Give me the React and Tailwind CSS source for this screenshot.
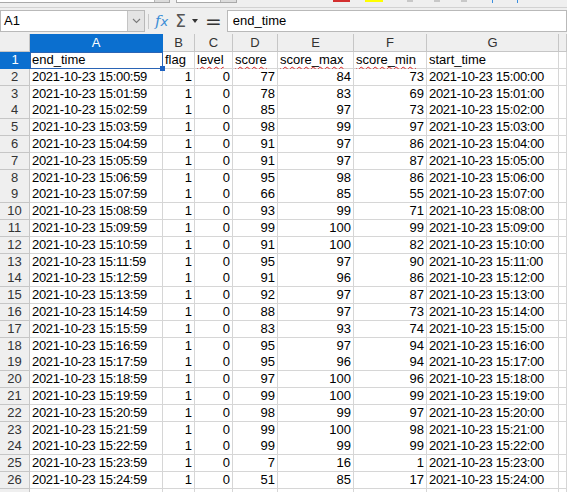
import React from 'react';

const DATA = [
	[77, 84, 73],
	[78, 83, 69],
	[85, 97, 73],
	[98, 99, 97],
	[91, 97, 86],
	[91, 97, 87],
	[95, 98, 86],
	[66, 85, 55],
	[93, 99, 71],
	[99, 100, 99],
	[91, 100, 82],
	[95, 97, 90],
	[91, 96, 86],
	[92, 97, 87],
	[88, 97, 73],
	[83, 93, 74],
	[95, 97, 94],
	[95, 96, 94],
	[97, 100, 96],
	[99, 100, 99],
	[98, 99, 97],
	[99, 100, 98],
	[99, 99, 99],
	[7, 16, 1],
	[51, 85, 17],
];

const COLS = ['A', 'B', 'C', 'D', 'E', 'F', 'G', ''];

const GRID = 'grid grid-cols-[30px_133px_32px_38px_45px_76px_73px_132px_1fr]';

const pad = (n) => String(n).padStart(2, '0');

const Cell = ({ children, right, className = '' }) => (
	<div
		className={`h-full border-r border-b border-[#d6d6d6] bg-white px-[2px] leading-[16px] whitespace-nowrap overflow-visible ${
			right ? 'text-right' : 'text-left'
		} ${className}`}
	>
		{children}
	</div>
);

const Wavy = ({ children }) => (
	<span className="underline decoration-wavy decoration-[#e02020] decoration-1 underline-offset-2">{children}</span>
);

export default function App() {
	return (
		<div className="w-[567px] h-[492px] overflow-hidden bg-[#efefef] font-['Liberation_Sans',Arial,sans-serif] text-[13px] text-black">
			{/* toolbar remnant */}
			<div className="h-[8px] border-b border-[#d2d2d2] flex items-start">
				<div className="w-[170px] h-[3px] flex bg-white border-b border-r border-[#a9a9a9]">
					<div className="flex-1" />
					<div className="w-[15px] bg-[#dcdcdc] border-l border-[#b5b5b5]" />
				</div>
				<div className="ml-[6px] w-[61px] h-[3px] flex bg-white border-b border-x border-[#a9a9a9]">
					<div className="flex-1" />
					<div className="w-[16px] bg-[#dcdcdc] border-l border-[#b5b5b5]" />
				</div>
				<div className="ml-[96px] w-[17px] h-[2px] bg-[#d32f2f]" />
				<div className="ml-[15px] w-[18px] h-[2px] bg-[#ffff00]" />
				<div className="ml-[24px] w-[6px] h-[2px] bg-[#c8c8c8]" />
				<div className="ml-[21px] w-[6px] h-[2px] bg-[#c8c8c8]" />
				<div className="ml-[21px] w-[6px] h-[2px] bg-[#c8c8c8]" />
				<div className="ml-[25px] w-[1px] h-[3px] bg-[#3b8fe0]" />
				<div className="ml-[24px] w-[1px] h-[3px] bg-[#3b8fe0]" />
			</div>

			{/* formula bar */}
			<div className="h-[26px] flex items-start pt-[2px]">
				<div className="w-[145px] h-[22px] flex bg-white border border-[#b9b9b9]">
					<div className="flex-1 pl-[3px] leading-[20px] text-[13px]">A1</div>
					<div className="w-[17px] bg-[#e4e4e4] border-l border-[#c4c4c4] flex items-center justify-center">
						<svg width="9" height="6" viewBox="0 0 9 6" fill="none" stroke="#7a7a7a" strokeWidth="1.1">
							<path d="M1 1l3.5 3.5L8 1" />
						</svg>
					</div>
				</div>
				<div className="ml-[3px] mt-[4px] w-px h-[15px] bg-[#c9c9c9]" />
				<div className="ml-[6px] h-[22px] flex items-center text-[#3a8dd6] italic font-['DejaVu_Serif',serif] text-[15px] leading-none">
					f<span className="text-[13px] font-['DejaVu_Sans',sans-serif] italic">x</span>
				</div>
				<div className="ml-[7px] h-[22px] flex items-center text-[#555] text-[17px] leading-none font-['DejaVu_Sans',sans-serif]">
					Σ
				</div>
				<div className="ml-[6px] h-[22px] flex items-center">
					<svg width="6" height="4" viewBox="0 0 6 4">
						<path d="M0 0h6L3 4z" fill="#333" />
					</svg>
				</div>
				<div className="ml-[7px] h-[22px] flex items-center text-[#333] text-[20px] leading-none font-['DejaVu_Sans',sans-serif]">
					=
				</div>
				<div className="ml-[5px] flex-1 h-[22px] bg-white border border-[#b9b9b9] pl-[5px] leading-[20px]">
					end_time
				</div>
			</div>

			{/* column headers */}
			<div className={`${GRID} h-[18px]`}>
				<div className="bg-[#efefef] border-r border-b border-[#c6c6c6]" />
				{COLS.map((c, i) => (
					<div
						key={i}
						className={`border-r border-b text-center leading-[17px] text-[13px] ${
							c === 'A' ? 'bg-[#0b6fcf] text-white border-[#0b6fcf]' : 'bg-[#efefef] text-[#333] border-[#c6c6c6]'
						}`}
					>
						{c}
					</div>
				))}
			</div>

			{/* row 1 */}
			<div className={`${GRID} h-[16.8px]`}>
				<div className="bg-[#0b6fcf] text-white text-center leading-[16px] border-b border-[#0b6fcf]">1</div>
				<div className="relative h-full bg-white border border-[#2a64b5] px-[1px] leading-[14px]">
					end_time
					<div className="absolute -right-[3px] -bottom-[3px] w-[5px] h-[5px] bg-[#1d62c2]" />
				</div>
				<Cell>flag</Cell>
				<Cell>
					<Wavy>level</Wavy>
				</Cell>
				<Cell>
					<Wavy>score</Wavy>
				</Cell>
				<Cell>
					<Wavy>score_max</Wavy>
				</Cell>
				<Cell>
					<Wavy>score_min</Wavy>
				</Cell>
				<Cell>start_time</Cell>
				<Cell />
			</div>

			{DATA.map((r, i) => (
				<div key={i} className={`${GRID} h-[16.8px]`}>
					<div className="bg-[#efefef] text-[#333] text-center leading-[16px] border-r border-b border-[#c6c6c6]">
						{i + 2}
					</div>
					<Cell className="tracking-[-0.3px]">{`2021-10-23 15:${pad(i)}:59`}</Cell>
					<Cell right>1</Cell>
					<Cell right>0</Cell>
					<Cell right>{r[0]}</Cell>
					<Cell right>{r[1]}</Cell>
					<Cell right>{r[2]}</Cell>
					<Cell className="tracking-[-0.3px]">{`2021-10-23 15:${pad(i)}:00`}</Cell>
					<Cell />
				</div>
			))}
			<div className={`${GRID} h-[16.8px]`}>
				<div className="bg-[#efefef] border-r border-[#c6c6c6]" />
				{COLS.map((c, i) => (
					<div key={i} className="bg-white border-r border-[#d6d6d6]" />
				))}
			</div>
		</div>
	);
}
